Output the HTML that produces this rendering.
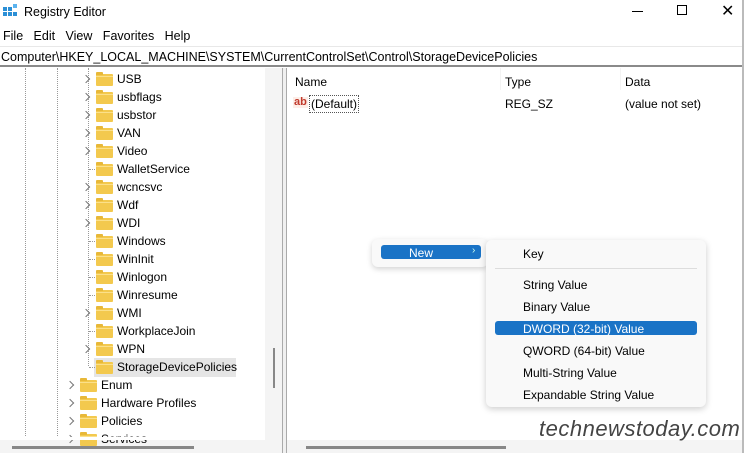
<!DOCTYPE html><html><head><style>
*{margin:0;padding:0;box-sizing:border-box}
body{width:744px;height:453px;overflow:hidden;background:#fff;font-family:"Liberation Sans",sans-serif;font-size:12px;color:#000;position:relative}
.a{position:absolute;white-space:nowrap}
.f{position:absolute;width:17px;height:12px;background:#f3c94e;border-radius:1px}
.f:before{content:"";position:absolute;left:0;top:-2px;width:7px;height:3px;background:#e8b838;border-radius:1px 1px 0 0}
.f:after{content:"";position:absolute;left:0;right:0;top:2px;height:1px;background:#fbe08a}
.c{position:absolute;width:6px;height:6px;border-right:1.3px solid #777;border-top:1.3px solid #777;transform:rotate(45deg)}
.dv{position:absolute;border-left:1px dotted #999}
.dh{position:absolute;border-top:1px dotted #999;width:8px}
</style></head><body>
<svg class="a" style="left:3px;top:4px" width="15" height="15"><rect x="0" y="3" width="4" height="4" fill="#2b8fd6"/><rect x="5" y="3" width="4" height="4" fill="#2b8fd6"/><rect x="0" y="8" width="4" height="4" fill="#2b8fd6"/><rect x="5" y="8" width="4" height="4" fill="#2b8fd6"/><rect x="10" y="8" width="4" height="4" fill="#2b8fd6"/><rect x="10" y="0" width="4" height="4" fill="#5bb3ee"/></svg>
<div class="a" style="left:24px;top:5px;font-size:12.5px">Registry Editor</div>
<div class="a" style="left:632px;top:11px;width:11px;border-top:1px solid #000"></div>
<div class="a" style="left:677px;top:5px;width:10px;height:10px;border:1px solid #000"></div>
<div class="a" style="left:721px;top:1px;font-size:16px;font-weight:100">✕</div>
<div class="a" style="left:3px;top:29px;font-size:12.5px">File&nbsp;&nbsp;&nbsp;Edit&nbsp;&nbsp;&nbsp;View&nbsp;&nbsp;&nbsp;Favorites&nbsp;&nbsp;&nbsp;Help</div>
<div class="a" style="left:0;top:46px;width:744px;height:21px;border-top:1px solid #e8e8e8;border-bottom:2px solid #8a8a8a"></div>
<div class="a" style="left:1px;top:50px;font-size:12.5px">Computer\HKEY_LOCAL_MACHINE\SYSTEM\CurrentControlSet\Control\StorageDevicePolicies</div>
<div class="a" style="left:265px;top:68px;width:17px;height:377px;background:#f4f4f4"></div>
<div class="a" style="left:273px;top:348px;width:2px;height:40px;background:#888"></div>
<div class="a" style="left:282px;top:68px;width:5px;height:385px;background:#f0f0f0;border-left:1px solid #aaa;border-right:1px solid #aaa"></div>
<div class="a" style="left:742px;top:0;width:2px;height:453px;background:#bbb"></div>
<div class="a" style="left:0;top:440px;width:282px;height:13px;background:#f4f4f4"></div>
<div class="a" style="left:12px;top:446px;width:182px;height:3px;background:#888"></div>
<div class="a" style="left:287px;top:440px;width:455px;height:13px;background:#f4f4f4"></div>
<div class="a" style="left:306px;top:446px;width:200px;height:3px;background:#888"></div>
<div class="dv" style="left:25px;top:68px;height:372px"></div>
<div class="dv" style="left:57px;top:68px;height:372px"></div>
<div class="dv" style="left:88px;top:68px;height:298px"></div>
<div class="a" style="left:94px;top:358px;width:142px;height:19px;background:#e5e5e5"></div>
<div id="t"></div>
<script>
var r=[["USB",1],["usbflags",1],["usbstor",1],["VAN",1],["Video",1],["WalletService",0],["wcncsvc",1],["Wdf",1],["WDI",1],["Windows",0],["WinInit",0],["Winlogon",0],["Winresume",0],["WMI",1],["WorkplaceJoin",0],["WPN",1],["StorageDevicePolicies",0]];
var h="";
r.forEach(function(x,i){var y=79+i*18;
h+=(x[1]?'<div class="c" style="left:83px;top:'+(y-3)+'px"></div>':'<div class="dh" style="left:89px;top:'+y+'px"></div>')+'<div class="f" style="left:96px;top:'+(y-5)+'px"></div><div class="a" style="left:117px;top:'+(y-7)+'px">'+x[0]+'</div>';});
["Enum","Hardware Profiles","Policies","Services"].forEach(function(x,i){var y=385+i*18;
h+='<div class="c" style="left:67px;top:'+(y-3)+'px"></div><div class="f" style="left:80px;top:'+(y-5)+'px"></div><div class="a" style="left:101px;top:'+(y-7)+'px">'+x+'</div>';});
document.getElementById('t').innerHTML=h;
</script>
<div class="a" style="left:0;top:437px;width:265px;height:3px;background:#fff"></div>
<div class="a" style="left:295px;top:75px">Name</div>
<div class="a" style="left:500px;top:68px;height:22px;border-left:1px solid #f3f3f3"></div>
<div class="a" style="left:505px;top:75px">Type</div>
<div class="a" style="left:620px;top:68px;height:22px;border-left:1px solid #f3f3f3"></div>
<div class="a" style="left:625px;top:75px">Data</div>
<div class="a" style="left:293px;top:97px;font-size:11px;font-weight:bold;color:#c0392b;background:#fdeee8;line-height:11px;padding:0 1px">ab</div>
<div class="a" style="left:309px;top:95px;border:1px dotted #555;padding:1px 1px">(Default)</div>
<div class="a" style="left:505px;top:97px">REG_SZ</div>
<div class="a" style="left:625px;top:97px">(value not set)</div>
<div class="a" style="left:372px;top:239px;width:116px;height:28px;background:#f9f9f9;border-radius:6px;box-shadow:0 2px 6px rgba(0,0,0,.18)"></div>
<div class="a" style="left:381px;top:245px;width:100px;height:14px;background:#1a73c6;border-radius:3px"></div>
<div class="a" style="left:409px;top:246px;color:#fff">New</div>
<div class="a" style="left:472px;top:245px;color:#cfe;font-size:10px">›</div>
<div class="a" style="left:486px;top:240px;width:220px;height:167px;background:#f9f9f9;border-radius:6px;box-shadow:0 2px 7px rgba(0,0,0,.2)"></div>
<div class="a" style="left:495px;top:268px;width:202px;border-top:1px solid #ddd"></div>
<div class="a" style="left:495px;top:321px;width:202px;height:14px;background:#1a73c6;border-radius:3px"></div>
<div class="a" style="left:523px;top:247px">Key</div>
<div class="a" style="left:523px;top:278px">String Value</div>
<div class="a" style="left:523px;top:300px">Binary Value</div>
<div class="a" style="left:523px;top:322px;color:#fff">DWORD (32-bit) Value</div>
<div class="a" style="left:523px;top:344px">QWORD (64-bit) Value</div>
<div class="a" style="left:523px;top:366px">Multi-String Value</div>
<div class="a" style="left:523px;top:388px">Expandable String Value</div>
<div class="a" style="left:539px;top:416px;font-size:22px;font-style:italic;color:#444;letter-spacing:.5px">technewstoday.com</div>
</body></html>
